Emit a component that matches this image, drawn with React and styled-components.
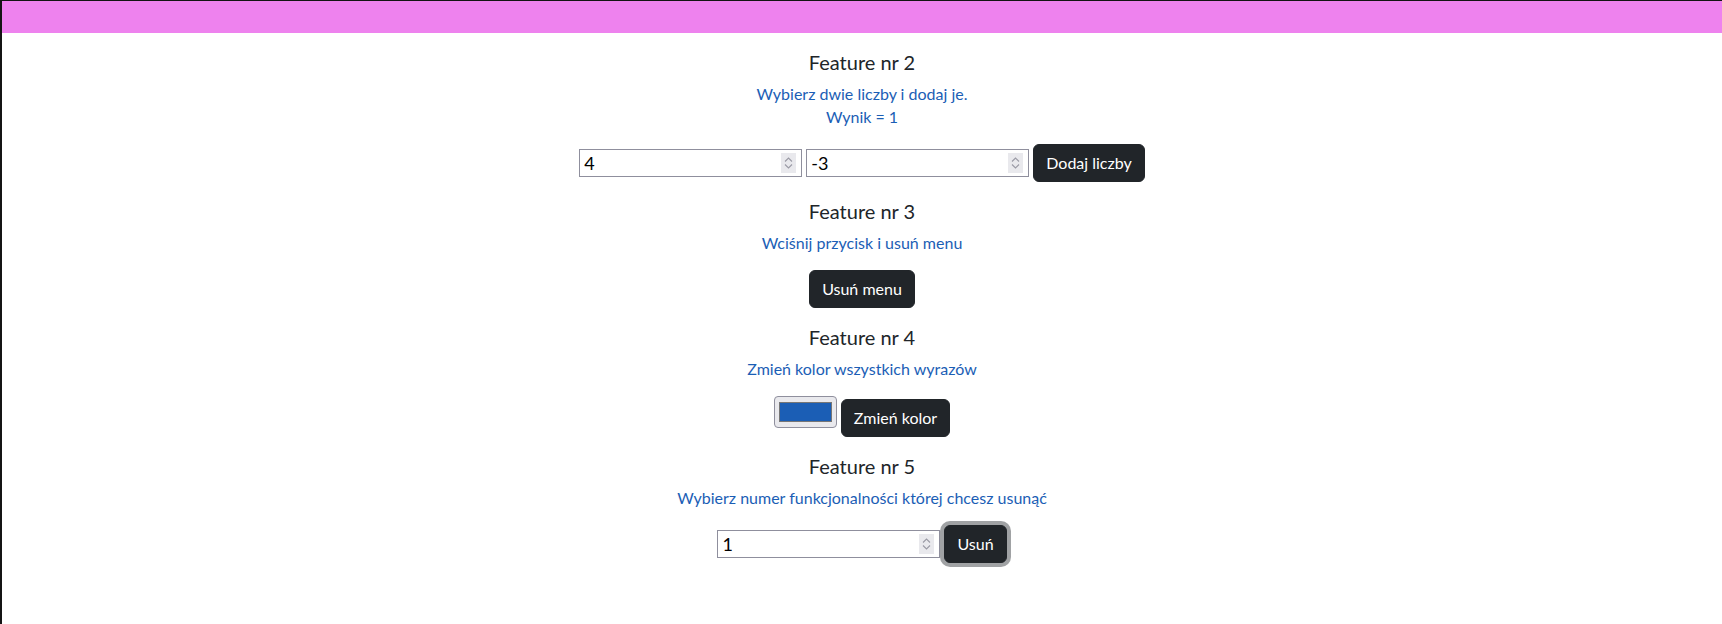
import styled, { createGlobalStyle } from "styled-components";

const GlobalStyle = createGlobalStyle`
  * {
    box-sizing: border-box;
  }
  body {
    margin: 0;
    background: #fff;
    font-family: Lato, "Liberation Sans", sans-serif;
    color: #212529;
  }
`;

const Okno = styled.div`
  min-height: 100vh;
  border-top: 1px solid #141414;
  border-left: 2px solid #141414;
`;

const Menu = styled.nav`
  height: 32px;
  background-color: #ee82ee;
`;

const Tresc = styled.main`
  display: flex;
  flex-direction: column;
  align-items: center;
  padding-top: 17px;
`;

const Sekcja = styled.section`
  display: flex;
  flex-direction: column;
  align-items: center;
  text-align: center;
  margin-bottom: 17px;
`;

const Tytul = styled.h5`
  margin: 0 0 8px;
  font-size: 20px;
  font-weight: 400;
  line-height: 24px;
  color: #212529;
`;

const Opis = styled.p`
  margin: 0 0 16px;
  font-size: 16px;
  line-height: 23px;
  color: #1b5eb5;
`;

const Wiersz = styled.div`
  display: flex;
  align-items: ${(props) => props.align || "center"};
  gap: 4px;
`;

const PoleLiczby = styled.label`
  display: flex;
  align-items: center;
  width: 223px;
  height: 28px;
  padding: 0 5px 0 4px;
  border: 1px solid #8f8f9d;
  background: #fff;
  input {
    flex: 1;
    min-width: 0;
    border: none;
    outline: none;
    padding: 0;
    font-family: Lato, "Liberation Sans", sans-serif;
    font-size: 18px;
    font-weight: 400;
    color: #000;
    background: transparent;
    -moz-appearance: textfield;
  }
  input::-webkit-inner-spin-button,
  input::-webkit-outer-spin-button {
    -webkit-appearance: none;
    margin: 0;
  }
`;

const Strzalki = styled.span`
  display: flex;
  width: 15px;
  height: 20px;
  background: #e9e9ed;
`;

const Przycisk = styled.button`
  margin-top: ${(props) => props.przesuniecie || 0}px;
  padding: 6px 12px;
  border: 1px solid #212529;
  border-radius: 6px;
  background-color: #212529;
  color: #fff;
  font-family: Lato, "Liberation Sans", sans-serif;
  font-size: 16px;
  line-height: 24px;
  cursor: pointer;
  box-shadow: ${(props) =>
    props.aktywny ? "0 0 0 4px rgba(66, 70, 73, 0.5)" : "none"};
`;

const Kolor = styled.input`
  width: 63px;
  height: 32px;
  padding: 0;
  border: 1px solid #8f8f9d;
  border-radius: 4px;
  background: #e9e9ed;
  cursor: pointer;
  &::-webkit-color-swatch-wrapper {
    padding: 5px 4px;
  }
  &::-webkit-color-swatch {
    border: 1px solid #767676;
    border-radius: 0;
  }
`;

const Liczba = ({ wartosc }) => (
  <PoleLiczby>
    <input type="number" defaultValue={wartosc} />
    <Strzalki>
      <svg width="15" height="20" viewBox="0 0 15 20" fill="none">
        <path d="M4 8.5 L7.5 5 L11 8.5" stroke="#9a9aa5" strokeWidth="1.1" />
        <path d="M4 11.5 L7.5 15 L11 11.5" stroke="#9a9aa5" strokeWidth="1.1" />
      </svg>
    </Strzalki>
  </PoleLiczby>
);

const App = () => {
  return (
    <>
      <GlobalStyle />
      <Okno>
        <Menu />
        <Tresc>
          <Sekcja>
            <Tytul>Feature nr 2</Tytul>
            <Opis>
              Wybierz dwie liczby i dodaj je.
              <br />
              Wynik = 1
            </Opis>
            <Wiersz>
              <Liczba wartosc={4} />
              <Liczba wartosc={-3} />
              <Przycisk>Dodaj liczby</Przycisk>
            </Wiersz>
          </Sekcja>
          <Sekcja>
            <Tytul>Feature nr 3</Tytul>
            <Opis>Wciśnij przycisk i usuń menu</Opis>
            <Przycisk>Usuń menu</Przycisk>
          </Sekcja>
          <Sekcja>
            <Tytul>Feature nr 4</Tytul>
            <Opis>Zmień kolor wszystkich wyrazów</Opis>
            <Wiersz align="flex-start">
              <Kolor type="color" defaultValue="#1b5eb5" />
              <Przycisk przesuniecie={3}>Zmień kolor</Przycisk>
            </Wiersz>
          </Sekcja>
          <Sekcja>
            <Tytul>Feature nr 5</Tytul>
            <Opis>Wybierz numer funkcjonalności której chcesz usunąć</Opis>
            <Wiersz>
              <Liczba wartosc={1} />
              <Przycisk aktywny>Usuń</Przycisk>
            </Wiersz>
          </Sekcja>
        </Tresc>
      </Okno>
    </>
  );
};

export default App;
